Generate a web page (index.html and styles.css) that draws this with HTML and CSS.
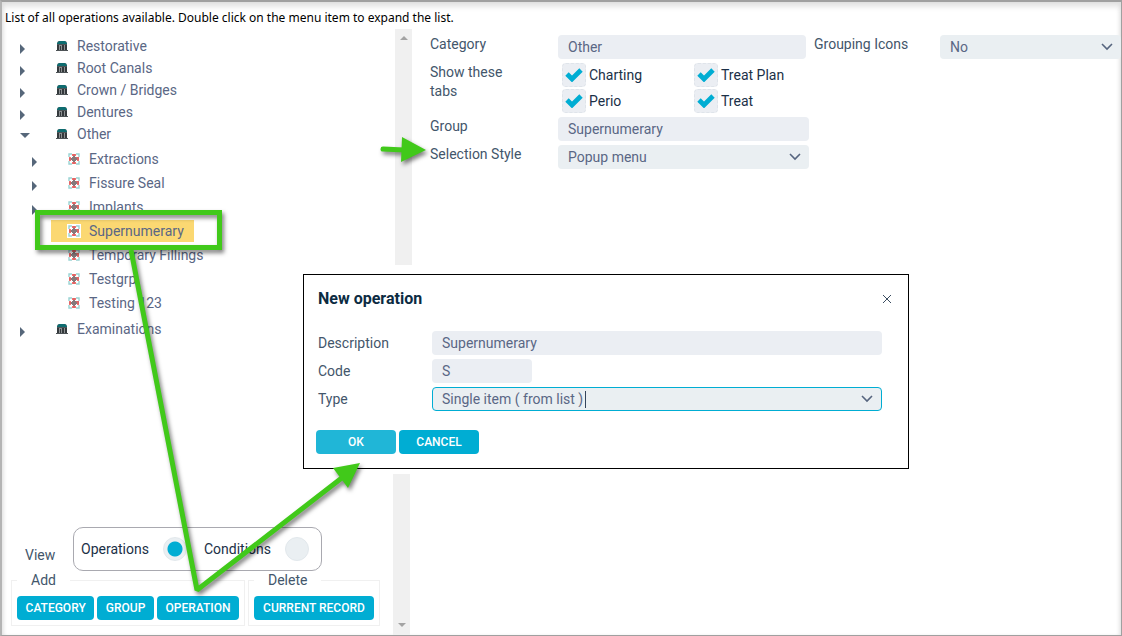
FILE: index.html
```html
<!DOCTYPE html>
<html lang="en">
<head>
    <meta charset="utf-8">
    <title>Operations</title>
    <link rel="stylesheet" href="styles.css">
</head>
<body>
    <!-- Shared icons -->
    <svg width="0" height="0" class="sprite" aria-hidden="true">
        <symbol id="icon-category" viewBox="0 0 12 12">
            <path d="M2 1h8l1 2v8H1V3z" fill="#8b8f91"/>
            <path d="M1 5h2v6H1zM4 6h1v5H4zM6 5h2v6H6zM9 5h2v6H9z" fill="#34393c"/>
            <path d="M1 4h10v1H1zM0 10h12v1H0z" fill="#4d5356"/>
            <path d="M3 1h6l2 2v1H1V3z" fill="#0e6c70"/>
        </symbol>
        <symbol id="icon-group" viewBox="0 0 12 12">
            <path d="M0 0h12v12H0z" fill="#fff"/>
            <path d="M1 4V1h3M8 1h3v3M11 8v3H8M4 11H1V8" fill="none" stroke="#9ad3d3" stroke-width="1.4"/>
            <path d="M4 1h4v2H4zM4 9h4v2H4zM1 4h2v4H1zM9 4h2v4H9z" fill="#f37070"/>
            <path d="M5 1h2v3h4v3H7v4H5V7H1V5h4z" fill="#dd6666"/>
            <path d="M5 3h2v2h2v2H7v2H5V7H3V5h2z" fill="#85797b"/>
            <path d="M4 4h4v4H4z" fill="#85797b"/>
        </symbol>
    </svg>

    <div class="window">
        <p class="intro">List of all operations available. Double click on the menu item to expand the list.</p>

        <main class="content">
            <section class="sidebar">
                <div class="tree-panel">
                    <ul class="tree">
                        <li><div class="row"><button class="toggle" aria-label="Expand Restorative"></button><span class="item"><svg class="icon"><use href="#icon-category"/></svg>Restorative</span></div></li>
                        <li><div class="row"><button class="toggle" aria-label="Expand Root Canals"></button><span class="item"><svg class="icon"><use href="#icon-category"/></svg>Root Canals</span></div></li>
                        <li><div class="row"><button class="toggle" aria-label="Expand Crown / Bridges"></button><span class="item"><svg class="icon"><use href="#icon-category"/></svg>Crown / Bridges</span></div></li>
                        <li><div class="row"><button class="toggle" aria-label="Expand Dentures"></button><span class="item"><svg class="icon"><use href="#icon-category"/></svg>Dentures</span></div></li>
                        <li>
                            <div class="row"><button class="toggle open" aria-label="Collapse Other"></button><span class="item"><svg class="icon"><use href="#icon-category"/></svg>Other</span></div>
                            <ul class="subtree">
                                <li class="row"><button class="toggle" aria-label="Expand Extractions"></button><span class="item"><svg class="icon"><use href="#icon-group"/></svg>Extractions</span></li>
                                <li class="row"><button class="toggle" aria-label="Expand Fissure Seal"></button><span class="item"><svg class="icon"><use href="#icon-group"/></svg>Fissure Seal</span></li>
                                <li class="row"><button class="toggle" aria-label="Expand Implants"></button><span class="item"><svg class="icon"><use href="#icon-group"/></svg>Implants</span></li>
                                <li class="row leaf"><span class="item selected"><svg class="icon"><use href="#icon-group"/></svg>Supernumerary</span></li>
                                <li class="row leaf"><span class="item"><svg class="icon"><use href="#icon-group"/></svg>Temporary Fillings</span></li>
                                <li class="row leaf"><span class="item"><svg class="icon"><use href="#icon-group"/></svg>Testgrp</span></li>
                                <li class="row leaf"><span class="item"><svg class="icon"><use href="#icon-group"/></svg>Testing 123</span></li>
                            </ul>
                        </li>
                        <li><div class="row"><button class="toggle" aria-label="Expand Examinations"></button><span class="item"><svg class="icon"><use href="#icon-category"/></svg>Examinations</span></div></li>
                    </ul>
                    <div class="track track-top"></div>
                </div>

                <div class="actions-panel">
                    <div class="actions">
                        <div class="view-row">
                            <span class="view-label">View</span>
                            <div class="view-box" role="radiogroup" aria-label="View">
                                <label for="view-operations">Operations</label>
                                <input type="radio" id="view-operations" name="view" checked>
                                <label for="view-conditions">Conditions</label>
                                <input type="radio" id="view-conditions" name="view">
                            </div>
                        </div>
                        <div class="action-groups">
                            <fieldset class="add-group">
                                <legend>Add</legend>
                                <button class="btn">CATEGORY</button>
                                <button class="btn">GROUP</button>
                                <button class="btn">OPERATION</button>
                            </fieldset>
                            <fieldset class="delete-group">
                                <legend>Delete</legend>
                                <button class="btn">CURRENT RECORD</button>
                            </fieldset>
                        </div>
                    </div>
                    <div class="track track-bottom"></div>
                </div>
            </section>

            <form class="details">
                <label for="category">Category</label>
                <input class="field category" type="text" id="category" value="Other">
                <label for="grouping">Grouping Icons</label>
                <select class="field" id="grouping"><option>No</option></select>

                <span class="tabs-label">Show these tabs</span>
                <div class="tabs">
                    <label><input type="checkbox" checked>Charting</label>
                    <label><input type="checkbox" checked>Treat Plan</label>
                    <label><input type="checkbox" checked>Perio</label>
                    <label><input type="checkbox" checked>Treat</label>
                </div>

                <label class="first" for="group">Group</label>
                <input class="field" type="text" id="group" value="Supernumerary">

                <label class="first" for="style">Selection Style</label>
                <select class="field" id="style"><option>Popup menu</option></select>
            </form>
        </main>
    </div>

    <!-- New operation popup -->
    <div class="dialog" role="dialog" aria-labelledby="dialog-title">
        <div class="dialog-head">
            <h2 id="dialog-title">New operation</h2>
            <button class="close" aria-label="Close"><svg width="8" height="8" viewBox="0 0 8 8"><path d="M0 0l8 8M8 0L0 8" stroke="#3b4d60" stroke-width="1"/></svg></button>
        </div>
        <div class="dialog-form">
            <label for="description">Description</label>
            <input class="field" type="text" id="description" value="Supernumerary">
            <label for="code">Code</label>
            <input class="field code" type="text" id="code" value="S">
            <label for="type">Type</label>
            <div class="combo">
                <select class="field active" id="type"><option>Single item ( from list )</option></select>
                <span class="caret"></span>
            </div>
        </div>
        <div class="dialog-buttons">
            <button class="btn light">OK</button>
            <button class="btn">CANCEL</button>
        </div>
    </div>

    <!-- Guide arrows -->
    <svg class="guide" width="440" height="636" viewBox="0 0 440 636" aria-hidden="true">
        <g fill="none" stroke="#41c91a" stroke-width="5">
            <rect x="37.5" y="212.5" width="182" height="35"/>
            <path d="M131 250L197 590L343 477" stroke-linejoin="bevel"/>
            <path d="M383 149L404 150" stroke-linecap="round"/>
        </g>
        <path d="M360 463L333 468L348 488zM402 137L426 150L401 162z" fill="#41c91a"/>
    </svg>
</body>
</html>
```

FILE: styles.css
```css
/* General Styles */
* {
    box-sizing: border-box;
}

body {
    margin: 0;
    font-family: Roboto, Arial, sans-serif;
    font-size: 14px;
    line-height: 19px;
    color: #43566b;
    background-color: #fff;
}

button,
input,
select {
    font-family: inherit;
    font-size: inherit;
}

ul {
    list-style: none;
    margin: 0;
    padding: 0;
}

.sprite {
    position: absolute;
}

.window {
    display: flex;
    flex-direction: column;
    min-height: 100vh;
    border: 1px solid #a0a0a0;
    border-width: 2px 1px 1px 2px;
    border-left-color: #b4b4b4;
    box-shadow: inset 0 5px 6px -1px #dedede, inset 3px 0 4px -2px #e4e4e4, inset -3px 0 4px -2px #e4e4e4;
}

.intro {
    margin: 0;
    padding: 8px 3px 0;
    font-family: "Noto Sans", sans-serif;
    font-size: 12px;
    line-height: 16px;
    color: #000;
}

.content {
    display: flex;
    flex: 1;
}

/* Sidebar */
.sidebar {
    display: flex;
    flex-direction: column;
    justify-content: space-between;
    flex: 0 0 410px;
    padding-top: 3px;
}

.tree-panel,
.actions-panel {
    display: flex;
    justify-content: space-between;
}

.actions-panel {
    padding-right: 2px;
}

.tree {
    padding: 6px 0 0 18px;
}

.row {
    display: flex;
    align-items: center;
    height: 22px;
}

.subtree {
    padding: 2px 0 3px 12px;
}

.subtree .row {
    height: 24px;
}

.leaf {
    padding-left: 19px;
}

.toggle {
    width: 19px;
    height: 14px;
    padding: 6px 0 0;
    border: none;
    background: none;
    display: flex;
    align-items: center;
}

.toggle.open {
    padding-top: 2px;
}

.toggle::before {
    content: "";
    border: 5px solid transparent;
    border-left-color: #56677a;
    border-right-width: 0;
}

.toggle.open::before {
    border: 5px solid transparent;
    border-top-color: #56677a;
    border-bottom-width: 0;
}

.item {
    display: flex;
    align-items: center;
    height: 22px;
    padding: 0 10px 0 17px;
    color: #5a6785;
    white-space: nowrap;
}

.icon {
    width: 12px;
    height: 12px;
    margin-right: 9px;
}

.item.selected {
    background-color: #fbd872;
}

.selected .icon {
    outline: 1px solid #fff;
}

.track {
    display: flex;
    justify-content: center;
    flex: 0 0 17px;
    background-color: #f0f0f0;
}

.track::before {
    content: "";
    height: 0;
    border: 4px solid transparent;
}

.track-top {
    height: 236px;
    padding-top: 7px;
}

.track-top::before {
    border-top-width: 0;
    border-bottom-color: #a3a3a3;
}

.track-bottom {
    height: 161px;
    align-items: flex-end;
    padding-bottom: 8px;
}

.track-bottom::before {
    border-bottom-width: 0;
    border-top-color: #a3a3a3;
}

/* View and action buttons */
.actions {
    align-self: flex-end;
    padding: 0 0 9px 9px;
}

.view-row {
    display: flex;
    align-items: center;
    padding-left: 14px;
}

.view-label {
    width: 48px;
    padding-top: 12px;
}

.view-box {
    display: flex;
    align-items: center;
    width: 249px;
    height: 44px;
    padding-left: 7px;
    border: 1px solid #a9a9b0;
    border-radius: 10px;
    color: #1b3047;
}

input[type="radio"] {
    appearance: none;
    flex: none;
    width: 24px;
    height: 24px;
    margin: 0 17px 0 14px;
    border: 1px solid #e2e8ec;
    border-radius: 50%;
    background-color: #eaeff2;
}

input[type="radio"]:checked {
    background: radial-gradient(circle, #00add3 7px, #eaeff2 8px);
}

.action-groups {
    display: flex;
    gap: 3px;
}

fieldset {
    display: flex;
    gap: 3px;
    margin: 0;
    padding: 6px 5px 5px;
    border: 1px solid #f0f0f0;
}

.add-group {
    min-width: 234px;
}

.delete-group {
    min-width: 132px;
}

legend {
    padding: 0 14px;
}

.btn {
    height: 24px;
    padding: 0 8px;
    border: none;
    border-radius: 4px;
    background-color: #00add3;
    color: #fff;
    font-size: 12px;
    font-weight: 500;
    white-space: nowrap;
    cursor: pointer;
}

fieldset .btn {
    flex: 1 0 auto;
}

.btn.light {
    background-color: #20b6d7;
}

/* Details form */
.details {
    display: grid;
    flex: 1;
    grid-template-columns: 128px 251px 131px minmax(60px, 1fr);
    gap: 4px 0;
    align-content: start;
    padding: 9px 0 0 18px;
}

.details > label:nth-of-type(2) {
    padding-left: 5px;
}

.first,
.tabs-label {
    grid-column: 1;
}

.tabs-label {
    padding-right: 50px;
}

.field {
    width: 100%;
    height: 24px;
    padding: 0 10px;
    border: none;
    border-radius: 4px;
    background-color: #ebeef3;
    color: #5a6785;
}

.category {
    width: 248px;
}

select.field {
    appearance: none;
    background: #eaeff2 url("data:image/svg+xml,%3Csvg xmlns='http://www.w3.org/2000/svg' width='12' height='8'%3E%3Cpath d='M1 1l5 5 5-5' fill='none' stroke='%2356657f' stroke-width='1.6'/%3E%3C/svg%3E") no-repeat right 8px center;
}

.tabs {
    display: grid;
    grid-template-columns: 132px 1fr;
    gap: 2px 0;
    padding-left: 4px;
    color: #1b3047;
}

.tabs label {
    display: flex;
    align-items: center;
    gap: 3px;
}

.tabs input {
    appearance: none;
    width: 24px;
    height: 24px;
    margin: 0;
    border: 1px dashed #dfe4ea;
    border-radius: 4px;
    background-color: #ebeef3;
}

.tabs input:checked {
    background-image: url("data:image/svg+xml,%3Csvg xmlns='http://www.w3.org/2000/svg' width='18' height='14'%3E%3Cpath d='M2 6l5 5 9-9' fill='none' stroke='%2300add3' stroke-width='4.8'/%3E%3C/svg%3E");
    background-repeat: no-repeat;
    background-position: center;
}

/* Dialog */
.dialog {
    position: absolute;
    top: 274px;
    left: 303px;
    width: 606px;
    padding: 14px 26px 14px 14px;
    border: 1px solid #000;
    background-color: #fff;
}

.dialog-head {
    display: flex;
    justify-content: space-between;
    align-items: center;
}

.dialog h2 {
    margin: 0;
    font-size: 16px;
    font-weight: 700;
    line-height: 19px;
    color: #0c2b42;
}

.close {
    display: flex;
    margin-right: -9px;
    padding: 0;
    border: none;
    background: none;
}

.dialog-form {
    display: grid;
    grid-template-columns: 114px 1fr;
    gap: 4px 0;
    align-items: center;
    padding: 23px 0 19px;
}

.code {
    width: 100px;
}

.combo {
    position: relative;
    display: flex;
}

.field.active {
    padding: 0 9px;
    border: 1px solid #00add3;
}

.caret {
    position: absolute;
    top: 4px;
    left: 153px;
    width: 1px;
    height: 17px;
    background-color: #33445c;
}

.dialog-buttons {
    display: flex;
    gap: 3px;
    margin-left: -2px;
}

.dialog-buttons .btn {
    width: 80px;
}

/* Guide arrows drawn over the page */
.guide {
    position: absolute;
    top: 0;
    left: 0;
    pointer-events: none;
    filter: drop-shadow(2px 3px 2px rgba(0, 0, 0, 0.5));
}
```
